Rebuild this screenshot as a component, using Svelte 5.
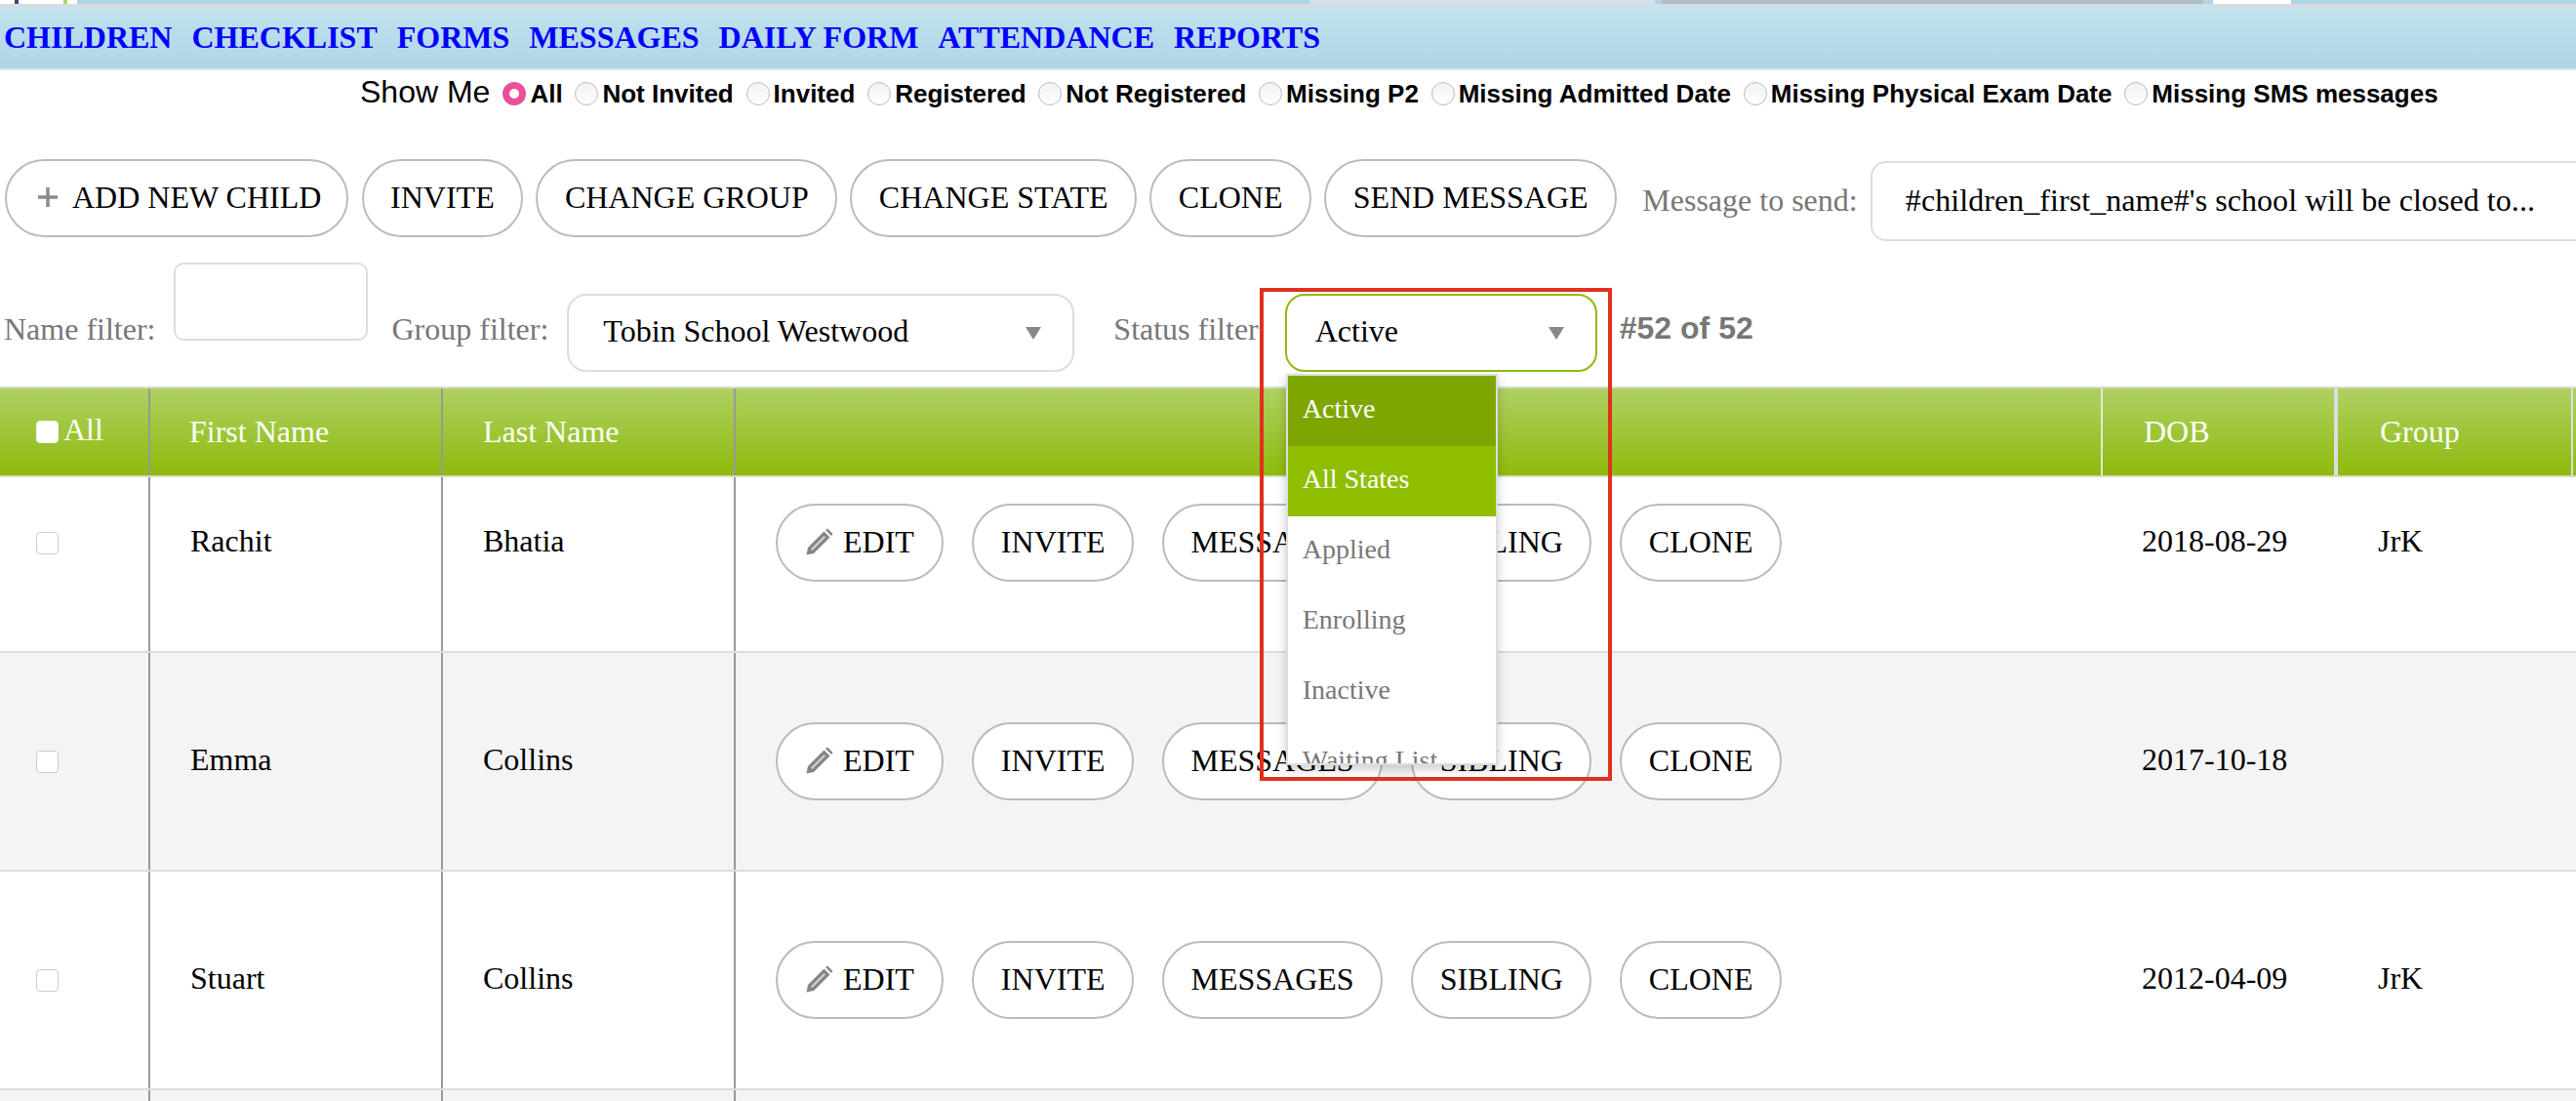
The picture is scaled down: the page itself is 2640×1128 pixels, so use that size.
<script>
  const navItems = ['CHILDREN', 'CHECKLIST', 'FORMS', 'MESSAGES', 'DAILY FORM', 'ATTENDANCE', 'REPORTS'];
  const showOptions = ['All', 'Not Invited', 'Invited', 'Registered', 'Not Registered', 'Missing P2', 'Missing Admitted Date', 'Missing Physical Exam Date', 'Missing SMS messages'];
  const toolbar = ['INVITE', 'CHANGE GROUP', 'CHANGE STATE', 'CLONE', 'SEND MESSAGE'];
  const rowActions = ['INVITE', 'MESSAGES', 'SIBLING', 'CLONE'];
  const states = ['Active', 'All States', 'Applied', 'Enrolling', 'Inactive', 'Waiting List'];
  const children = [
    { first: 'Rachit', last: 'Bhatia', dob: '2018-08-29', group: 'JrK' },
    { first: 'Emma', last: 'Collins', dob: '2017-10-18', group: '' },
    { first: 'Stuart', last: 'Collins', dob: '2012-04-09', group: 'JrK' }
  ];
</script>

<main>
  <div class="topstrip">
    <div class="logo"></div>
    <div class="tab one"></div>
    <div class="tab two"></div>
    <div class="tab three"></div>
  </div>

  <nav>
    {#each navItems as item}
      <a href="#top">{item}</a>
    {/each}
  </nav>

  <div class="showme">
    <span class="showlabel">Show Me</span>
    {#each showOptions as opt, i}
      <label class="opt">
        <span class="radio" class:on={i === 0}></span>{opt}
      </label>
    {/each}
  </div>

  <div class="toolbar">
    <button class="pill add">
      <svg class="plus" width="20" height="20" viewBox="0 0 20 20" aria-hidden="true">
        <path d="M10 0 V20 M0 10 H20" stroke="#8c8c8c" stroke-width="3.5" fill="none" />
      </svg>
      ADD NEW CHILD
    </button>
    {#each toolbar as label}
      <button class="pill">{label}</button>
    {/each}
    <span class="label msglabel">Message to send:</span>
    <div class="msgbox">#children_first_name#'s school will be closed to...</div>
  </div>

  <div class="filters">
    <span class="label">Name filter:</span>
    <div class="namebox"></div>
    <span class="label groupl">Group filter:</span>
    <div class="select group">Tobin School Westwood<span class="caret"></span></div>
    <span class="label statusl">Status filter</span>
    <div class="statuswrap">
      <div class="select status">Active<span class="caret"></span></div>
      <ul class="menu">
        {#each states as s, i}
          <li class:current={i === 0} class:hover={i === 1}>{s}</li>
        {/each}
      </ul>
    </div>
    <span class="count">#52 of 52</span>
    <div class="redbox"></div>
  </div>

  <div class="grid head">
    <div class="cell c1"><span class="check white"></span><span class="alltext">All</span></div>
    <div class="cell c2">First Name</div>
    <div class="cell c3">Last Name</div>
    <div class="cell c4"></div>
    <div class="cell c5">DOB</div>
    <div class="cell c6">Group</div>
    <div class="cell c7"></div>
  </div>

  {#each children as kid, i}
    <div class="grid row" class:alt={i % 2 === 1}>
      <div class="cell c1"><span class="check"></span></div>
      <div class="cell c2 txt">{kid.first}</div>
      <div class="cell c3 txt">{kid.last}</div>
      <div class="cell c4 actions">
        <button class="pill edit">
          <svg width="28" height="28" viewBox="0 0 28 28" aria-hidden="true">
            <path d="M0.5 27.5 L2 20 L18.5 3.5 L24.5 9.5 L8 26 Z" fill="#858585" />
            <path d="M5 21.5 L18.5 8 L20 9.5 L6.5 23 Z" fill="#d4d4d4" />
            <path d="M20 2 L22 0.5 L27.5 6 L26 8 Z" fill="#858585" />
          </svg>
          EDIT
        </button>
        {#each rowActions as label}
          <button class="pill">{label}</button>
        {/each}
      </div>
      <div class="cell c5 date txt">{kid.dob}</div>
      <div class="cell c6 date txt">{kid.group}</div>
      <div class="cell c7"></div>
    </div>
  {/each}
  <div class="grid row alt last">
    <div class="cell c1"></div>
    <div class="cell c2"></div>
    <div class="cell c3"></div>
    <div class="cell c4"></div>
  </div>
</main>

<style>
  :global(body) {
    margin: 0;
    background: #fff;
    overflow: hidden;
  }
  main {
    width: 2640px;
    height: 1128px;
    overflow: hidden;
    font-family: "Liberation Serif", "Times New Roman", serif;
    font-size: 32px;
    color: #000;
  }
  .topstrip {
    height: 4px;
    background: #aed5e6;
    display: flex;
  }
  .logo {
    width: 79px;
    background: linear-gradient(90deg, #fff 15px, #3a4a78 15px, #3a4a78 19px, #fff 19px, #fff 65px, #b8d66a 65px, #b8d66a 69px, #fff 69px);
  }
  .tab {
    height: 4px;
  }
  .tab.one {
    margin-left: 1263px;
    width: 354px;
    background: #cfe2ea;
  }
  .tab.two {
    margin-left: 7px;
    width: 555px;
    background: #aebfc7;
  }
  .tab.three {
    margin-left: 10px;
    width: 80px;
    background: #fff;
  }
  nav {
    height: 63px;
    border-top: 3px solid #d8dcde;
    border-bottom: 2px solid #dde1e3;
    background: linear-gradient(#c3e2ee, #aed5e6);
    display: flex;
    align-items: center;
    gap: 20px;
    padding-left: 4px;
  }
  nav a {
    font-weight: bold;
    color: #0000ff;
    text-decoration: none;
  }
  .showme {
    height: 44px;
    padding-left: 369px;
    display: flex;
    align-items: center;
    font-family: "Liberation Sans", Arial, sans-serif;
    margin-top: 2px;
  }
  .showlabel {
    margin: -4px 13px 0 0;
  }
  .opt {
    display: flex;
    align-items: center;
    gap: 4px;
    margin-right: 12.8px;
    font-size: 26px;
    font-weight: bold;
  }
  .radio {
    width: 24px;
    height: 24px;
    box-sizing: border-box;
    border-radius: 50%;
    border: 1px solid #bbb;
    background: linear-gradient(#f2f2f2, #fff);
  }
  .radio.on {
    border: 7px solid #ea4f9a;
    background: #fff;
  }
  .toolbar {
    display: flex;
    align-items: center;
    gap: 13.2px;
    padding-left: 5px;
    margin-top: 45px;
    height: 80px;
    white-space: nowrap;
  }
  .pill {
    height: 80px;
    box-sizing: border-box;
    padding: 0 27.5px 2px;
    background: #fff;
    border: 2px solid #bbb;
    border-radius: 40px;
    font: inherit;
    color: #000;
    display: inline-flex;
    align-items: center;
    flex: none;
  }
  .pill.add {
    padding: 0 26px 2px 32px;
  }
  .plus {
    margin-right: 15px;
    flex: none;
  }
  .label {
    color: #777;
    flex: none;
  }
  .msglabel {
    margin-left: 13px;
    padding-top: 4px;
  }
  .msgbox {
    box-sizing: border-box;
    width: 740px;
    flex: none;
    height: 82px;
    margin-top: 6px;
    border: 2px solid #ddd;
    border-radius: 16px;
    line-height: 76px;
    padding-left: 34px;
    letter-spacing: 0.06px;
  }
  .filters {
    position: relative;
    display: flex;
    align-items: flex-start;
    padding-left: 4px;
    margin-top: 26px;
    height: 127px;
    white-space: nowrap;
  }
  .filters .label {
    margin-top: 50px;
  }
  .namebox {
    box-sizing: border-box;
    width: 199px;
    height: 80px;
    margin-left: 19px;
    border: 2px solid #ddd;
    border-radius: 10px;
  }
  .filters .groupl {
    margin-left: 24px;
  }
  .select {
    box-sizing: border-box;
    height: 80px;
    margin-top: 32px;
    padding-bottom: 4px;
    border: 2px solid #ddd;
    border-radius: 20px;
    display: flex;
    align-items: center;
    position: relative;
    background: #fff;
  }
  .select.group {
    width: 520px;
    margin-left: 19px;
    padding-left: 35px;
  }
  .filters .statusl {
    margin-left: 40px;
  }
  .statuswrap {
    position: relative;
    margin-left: 27px;
    z-index: 5;
  }
  .select.status {
    width: 320px;
    border-color: #8fba0d;
    padding-left: 29px;
  }
  .caret {
    position: absolute;
    right: 32px;
    top: 32px;
    border-left: 8px solid transparent;
    border-right: 8px solid transparent;
    border-top: 13px solid #888;
  }
  .menu {
    position: absolute;
    left: 1px;
    top: 114px;
    width: 217px;
    height: 401px;
    box-sizing: border-box;
    margin: 0;
    padding: 0;
    list-style: none;
    overflow: hidden;
    background: #fff;
    border: 2px solid #ddd;
    box-shadow: 0 4px 10px rgba(0, 0, 0, 0.2);
    font-size: 28px;
    color: #777;
  }
  .menu li {
    height: 72px;
    line-height: 68px;
    padding-left: 15px;
  }
  .menu li.current {
    background: #7fa600;
    color: #fff;
  }
  .menu li.hover {
    background: #8fbd00;
    color: #fff;
  }
  .count {
    margin: 49px 0 0 23px;
    font-family: "Liberation Sans", Arial, sans-serif;
    font-weight: bold;
    color: #777;
  }
  .redbox {
    position: absolute;
    left: 1291px;
    top: 26px;
    width: 361px;
    height: 505px;
    box-sizing: border-box;
    border: 4px solid #e0301e;
    z-index: 6;
    pointer-events: none;
  }
  .grid {
    display: grid;
    grid-template-columns: 154px 300px 300px 1401px 241px 241px 3px;
  }
  .head {
    position: relative;
    z-index: 2;
    height: 93px;
    box-sizing: border-box;
    border-top: 2px solid #d5d9cc;
    border-bottom: 2px solid #d5dcc0;
    background: linear-gradient(#aed163, #8fba0d);
    color: #fff;
    margin-bottom: -44px;
  }
  .cell {
    box-sizing: border-box;
    display: flex;
    align-items: center;
    padding-left: 41px;
  }
  .c1, .c2, .c3 {
    border-right: 2px solid #999;
  }
  .c1 {
    padding-left: 37px;
  }
  .head .c2 {
    padding-left: 40px;
  }
  .head .c4 {
    border-right: 2px solid #e3ead0;
  }
  .head .c5 {
    border-right: 4px solid #ddd;
    padding-left: 42px;
  }
  .head .c6 {
    border-right: 2px solid #ddd;
    padding-left: 43px;
  }
  .check {
    width: 23px;
    height: 23px;
    box-sizing: border-box;
    border: 1px solid #ccc;
    border-radius: 4px;
    background: #fff;
    flex: none;
  }
  .check.white {
    border-color: #f4f4f4;
  }
  .alltext {
    margin-left: 5px;
    margin-top: -4px;
  }
  .row {
    height: 224px;
    border-bottom: 2px solid #ddd;
    box-sizing: border-box;
    background: #fff;
  }
  .row.alt {
    background: #f4f4f4;
  }
  .row.last {
    height: 60px;
    border: 0;
  }
  .txt {
    padding-bottom: 3px;
  }
  .actions {
    gap: 29px;
  }
  .pill.edit {
    padding: 0 28.5px 2px 29px;
    gap: 10px;
  }
  .date {
    padding-left: 40px;
  }
  .c6.date {
    padding-left: 41px;
  }
</style>
